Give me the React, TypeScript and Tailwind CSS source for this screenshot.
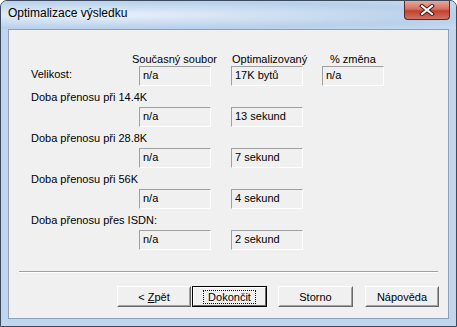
import React from "react";

const font = { fontFamily: '"Liberation Sans", Arial, sans-serif' };

const Field = ({ text, w = "w-[72px]" }: { text: string; w?: string }) => (
  <div
    className={`${w} h-[20px] border-t border-l border-b border-r border-t-[#a0a0a0] border-l-[#a0a0a0] border-b-white border-r-white pl-[3px] pt-[2px] leading-[13px]`}
  >
    {text}
  </div>
);

const rows = [
  { label: "Doba přenosu při 14.4K", a: "n/a", b: "13 sekund" },
  { label: "Doba přenosu při 28.8K", a: "n/a", b: "7 sekund" },
  { label: "Doba přenosu při 56K", a: "n/a", b: "4 sekund" },
  { label: "Doba přenosu přes ISDN:", a: "n/a", b: "2 sekund" },
];

const Btn = ({
  children,
  def,
  w = "w-[75px]",
}: {
  children: React.ReactNode;
  def?: boolean;
  w?: string;
}) => (
  <div
    className={`${w} h-[21px] ${
      def ? "border border-[#000]" : "border border-t-white border-l-white border-b-[#696969] border-r-[#696969]"
    } bg-[#f0f0f0]`}
  >
    <div
      className={`h-full w-full flex items-center justify-center ${
        def
          ? "border border-t-white border-l-white border-b-[#696969] border-r-[#696969]"
          : "border border-t-[#f0f0f0] border-l-[#f0f0f0] border-b-[#a0a0a0] border-r-[#a0a0a0]"
      }`}
    >
      {def ? (
        <span className="border border-dotted border-black px-[4px] leading-[12px]">
          {children}
        </span>
      ) : (
        <span className="leading-[12px]">{children}</span>
      )}
    </div>
  </div>
);

export default function App() {
  return (
    <div
      className="w-[457px] h-[327px] flex flex-col rounded-t-[7px] border border-[#3b4a5c] bg-[#bfd6ee] text-black text-[11px] overflow-hidden"
      style={font}
    >
      {/* title bar */}
      <div className="h-[28px] flex items-start bg-[radial-gradient(ellipse_at_20%_50%,#eaf2fb_0%,#cfe0f2_35%,#b8d0ea_70%,#c6dbf0_100%)]">
        <div className="pl-[7px] pt-[5px] text-[12px] leading-[15px] text-black">
          Optimalizace výsledku
        </div>
        <div className="ml-auto mr-[6px] w-[46px] h-[19px] rounded-b-[4px] border border-t-0 border-[#5a2a24] bg-[linear-gradient(#e9a898_0%,#d5705f_45%,#c2402f_55%,#cf7465_100%)] flex items-center justify-center">
          <svg width="16" height="12" viewBox="0 0 16 12">
            <path d="M3 2 L13 10 M13 2 L3 10" stroke="#3a1a16" strokeWidth="4" strokeLinecap="square" />
            <path d="M3 2 L13 10 M13 2 L3 10" stroke="#ffffff" strokeWidth="2" strokeLinecap="square" />
          </svg>
        </div>
      </div>

      {/* client area */}
      <div className="mx-[7px] mb-[7px] flex-1 border border-[#8ba1b9] bg-[#f0f0f0] flex flex-col">
        <div className="pl-[22px] pt-[23px]">
          <div className="flex h-[13px] leading-[13px]">
            <div className="w-[101px]" />
            <div className="w-[100px]">Současný soubor</div>
            <div className="w-[98px]">Optimalizovaný</div>
            <div>% změna</div>
          </div>
          <div className="flex">
            <div className="w-[108px] pt-[2px] leading-[13px]">Velikost:</div>
            <Field text="n/a" />
            <div className="w-[20px]" />
            <Field text="17K bytů" />
            <div className="w-[19px]" />
            <Field text="n/a" w="w-[62px]" />
          </div>
          {rows.map((r) => (
            <div key={r.label}>
              <div className="mt-[5px] h-[13px] leading-[13px]">{r.label}</div>
              <div className="flex mt-[3px] ml-[108px]">
                <Field text={r.a} />
                <div className="w-[20px]" />
                <Field text={r.b} />
              </div>
            </div>
          ))}
        </div>
        <div className="mt-[21px] ml-[10px] mr-[10px] h-[2px] border-t border-t-[#a0a0a0] border-b border-b-white" />
        <div className="flex mt-[13px] pl-[108px]">
          <Btn w="w-[74px]">
            &lt; <span className="underline">Z</span>pět
          </Btn>
          <div className="w-[1px]" />
          <Btn def>Dokončit</Btn>
          <div className="w-[11px]" />
          <Btn>Storno</Btn>
          <div className="w-[12px]" />
          <Btn w="w-[74px]">Nápověda</Btn>
        </div>
      </div>
    </div>
  );
}
